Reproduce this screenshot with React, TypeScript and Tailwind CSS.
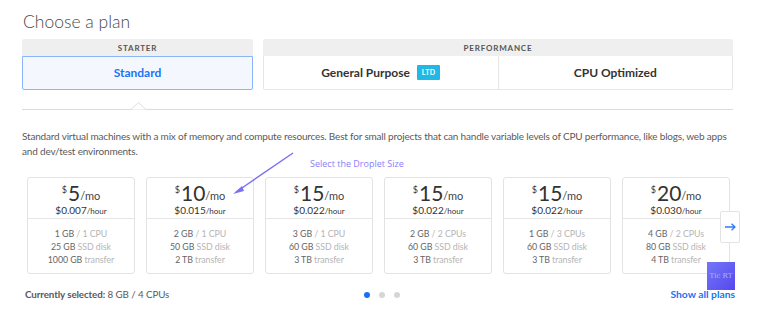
import React from 'react';

const plans = [
  { price: '5', hour: '0.007', mem: '1 GB', cpu: '1 CPU', disk: '25 GB', transfer: '1000 GB' },
  { price: '10', hour: '0.015', mem: '2 GB', cpu: '1 CPU', disk: '50 GB', transfer: '2 TB' },
  { price: '15', hour: '0.022', mem: '3 GB', cpu: '1 CPU', disk: '60 GB', transfer: '3 TB' },
  { price: '15', hour: '0.022', mem: '2 GB', cpu: '2 CPUs', disk: '60 GB', transfer: '3 TB' },
  { price: '15', hour: '0.022', mem: '1 GB', cpu: '3 CPUs', disk: '60 GB', transfer: '3 TB' },
  { price: '20', hour: '0.030', mem: '4 GB', cpu: '2 CPUs', disk: '80 GB', transfer: '4 TB' },
];

const App = () => {
  return (
    <div className="relative w-[758px] h-[313px] bg-white overflow-hidden font-['Lato',sans-serif] text-[#444]">
      <div className="pl-[22px] pr-[25px] pt-[10px]">
        <h1 className="text-[17.5px] font-light leading-[24px] text-[#4a4a4a] pl-[1px]">Choose a plan</h1>

        {/* Plan type tabs */}
        <div className="flex gap-[10px] mt-[5px]">
          <div className="w-[231px] flex flex-col">
            <div className="h-[17px] bg-[#efefef] rounded-t-[2px] flex items-center justify-center text-[8px] font-bold tracking-[0.8px] text-[#555]">
              STARTER
            </div>
            <div className="h-[34px] border border-[#8ab6f7] bg-[#f4f8fe] rounded-b-[2px] flex items-center justify-center text-[12px] font-bold text-[#1a73f5]">
              Standard
            </div>
          </div>
          <div className="flex-1 flex flex-col">
            <div className="h-[17px] bg-[#efefef] rounded-t-[2px] flex items-center justify-center text-[8px] font-bold tracking-[0.8px] text-[#555]">
              PERFORMANCE
            </div>
            <div className="h-[34px] border border-t-0 border-[#e6e6e6] rounded-b-[2px] flex">
              <div className="flex-1 flex items-center justify-center gap-[7px] text-[12px] font-bold text-[#333]">
                General Purpose
                <span className="bg-[#22b8e6] text-white text-[7px] font-bold px-[5px] py-[2px] rounded-[1px] tracking-[0.3px]">LTD</span>
              </div>
              <div className="flex-1 border-l border-[#e6e6e6] flex items-center justify-center text-[12px] font-bold text-[#333]">
                CPU Optimized
              </div>
            </div>
          </div>
        </div>

        {/* separator with notch */}
        <div className="relative mt-[19px] h-[1px] bg-[#dcdcdc]">
          <svg className="absolute left-[109px] top-[-7px]" width="15" height="8" viewBox="0 0 15 8">
            <path d="M0 7.5 L7.5 0.5 L15 7.5" fill="white" stroke="#dcdcdc" strokeWidth="1" />
          </svg>
        </div>

        <p className="mt-[19px] text-[10px] tracking-[-0.18px] leading-[15px] text-[#5a5a5a]">
          Standard virtual machines with a mix of memory and compute resources. Best for small projects that can handle variable levels of CPU performance, like blogs, web apps and dev/test environments.
        </p>

        {/* cards */}
        <div className="relative mt-[18px] pl-[5px] flex gap-[11px]">
          {plans.map((p, i) => (
            <div key={i} className="w-[108px] h-[97px] border border-[#e3e3e3] rounded-[3px] flex flex-col">
              <div className="h-[41px] border-b border-[#e6e6e6] flex flex-col items-center pt-[5px]">
                <div className="flex items-start leading-none text-[#333]">
                  <span className="text-[9px] mt-[2px] mr-[1px]">$</span>
                  <span className="text-[21px] leading-[20px]">{p.price}</span>
                  <span className="text-[11px] mt-[7px] text-[#444]">/mo</span>
                </div>
                <div className="mt-[1px] text-[10px] text-[#333] leading-[12px]">
                  ${p.hour}<span className="text-[8px]">/hour</span>
                </div>
              </div>
              <div className="flex-1 flex flex-col items-center pt-[8px] text-[8.8px] tracking-[-0.05px] leading-[13px]">
                <div><span className="text-[#666]">{p.mem}</span> <span className="text-[#b5b5b5]">/ {p.cpu}</span></div>
                <div><span className="text-[#666]">{p.disk}</span> <span className="text-[#b5b5b5]">SSD disk</span></div>
                <div><span className="text-[#666]">{p.transfer}</span> <span className="text-[#b5b5b5]">transfer</span></div>
              </div>
            </div>
          ))}

          {/* next arrow */}
          <div className="absolute left-[698px] top-[34px] w-[20px] h-[32px] bg-white border border-[#e3e3e3] rounded-[2px] flex items-center justify-center">
            <svg width="11" height="8" viewBox="0 0 11 8" fill="none" stroke="#2f7cf6" strokeWidth="1.3">
              <path d="M0 4 H10 M6.5 0.7 L10 4 L6.5 7.3" />
            </svg>
          </div>
        </div>

        {/* footer */}
        <div className="mt-[13px] grid grid-cols-[1fr_auto_1fr] items-center pl-[3px] mr-[-2px]">
          <div className="text-[9.8px] tracking-[-0.1px] text-[#5a5a5a]">
            <span className="font-bold">Currently selected:</span> 8 GB / 4 CPUs
          </div>
          <div className="flex gap-[9px] ml-[3px]">
            <span className="w-[6px] h-[6px] rounded-full bg-[#1a6ff5]" />
            <span className="w-[6px] h-[6px] rounded-full bg-[#d6d6d6]" />
            <span className="w-[6px] h-[6px] rounded-full bg-[#d6d6d6]" />
          </div>
          <div className="text-[10.3px] font-bold text-[#1a73f5] text-right">Show all plans</div>
        </div>
      </div>

      {/* annotation */}
      <div className="absolute left-[310px] top-[159px] text-[9px] leading-[9px] text-[#8a80f7] font-['Open_Sans',sans-serif]">
        Select the Droplet Size
      </div>
      <svg className="absolute left-[230px] top-[150px]" width="66" height="46" viewBox="0 0 66 46">
        <path d="M63 3 L6 42" stroke="#7b72f3" strokeWidth="1.5" />
        <path d="M3 44 L12 36 L14 41 Z" fill="#7b72f3" />
      </svg>

      {/* watermark box */}
      <div className="absolute left-[707px] top-[262px] w-[28px] h-[28px] bg-gradient-to-br from-[#7476f7] to-[#5746ef] flex items-center justify-center text-[7px] text-[#b8b8d8] font-['DejaVu_Serif',serif]">
        Tic RT
      </div>
    </div>
  );
};

export default App;
